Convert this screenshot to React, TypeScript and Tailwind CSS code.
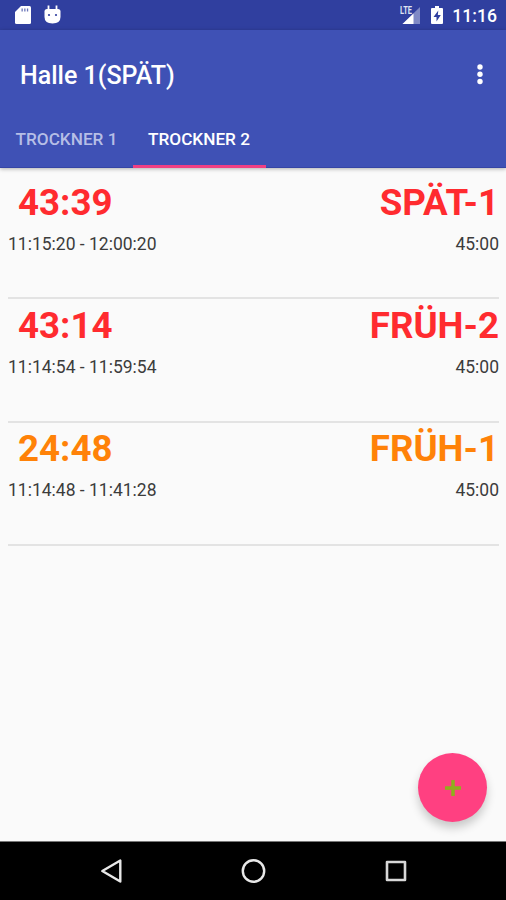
const timers = [
  { left: '43:39', name: 'SPÄT-1', range: '11:15:20 - 12:00:20', duration: '45:00', color: 'text-[#ff2b2f]' },
  { left: '43:14', name: 'FRÜH-2', range: '11:14:54 - 11:59:54', duration: '45:00', color: 'text-[#ff2b2f]' },
  { left: '24:48', name: 'FRÜH-1', range: '11:14:48 - 11:41:28', duration: '45:00', color: 'text-[#ff8208]' },
]

function StatusBar() {
  return (
    <div className="flex h-[30px] shrink-0 items-center bg-[#303f9f] pl-[15px] pr-[9px] text-white">
      <svg width="16" height="20" viewBox="0 0 16 20" fill="currentColor">
        <path d="M6 1h8.500q1.500 0 1.500 1.500v15q0 1.500-1.500 1.500h-13Q0 19 0 17.500V7z" />
        <path d="M6.500 3.500h1.300v3H6.500zM9.200 3.500h1.300v3H9.200zM11.900 3.500h1.300v3h-1.300z" fill="#6c77b9" />
      </svg>
      <svg className="ml-[13px]" width="17" height="20" viewBox="0 0 17 20">
        <path d="M4.500 .5v4M12.500 .5v4" stroke="currentColor" strokeWidth="1.800" />
        <path d="M.5 6.500Q.5 4 3 4h11q2.500 0 2.500 2.500V12q0 6.500-8 6.500t-8-6.500z" fill="currentColor" />
        <circle cx="5" cy="10" r="1.100" fill="#303f9f" />
        <circle cx="12" cy="10" r="1.100" fill="#303f9f" />
      </svg>
      <div className="ml-auto flex items-center">
        <svg width="22" height="20" viewBox="0 0 22 20">
          <path d="M22 2v17H4.500z" fill="#7f89c5" />
          <path d="M15.500 8.500V19H4.500z" fill="currentColor" />
          <text x="2" y="9" fontSize="10" fontWeight="700" textLength="12" lengthAdjust="spacingAndGlyphs" fill="#dfe2f2">LTE</text>
        </svg>
        <svg className="ml-[11px]" width="12" height="20" viewBox="0 0 12 20">
          <path d="M4 1h4v2h3q1 0 1 1v14q0 1-1 1H1q-1 0-1-1V4q0-1 1-1h3z" fill="currentColor" />
          <path d="M7.300 5.500 2.500 12h3v4.500L9.800 10H6.800z" fill="#303f9f" />
        </svg>
        <span className="ml-[9px] mt-[3px] text-[17.600px] font-medium leading-none">11:16</span>
      </div>
    </div>
  )
}

function TimerRow({ timer }: { timer: (typeof timers)[number] }) {
  return (
    <li className="h-[123.330px] border-b-2 border-[#e3e3e3] pt-[4.500px]">
      <div className={`flex justify-between pl-[10px] text-[36.700px] font-bold leading-[44px] ${timer.color}`}>
        <span>{timer.left}</span>
        <span>{timer.name}</span>
      </div>
      <div className="mt-[8px] flex justify-between text-[17.500px] leading-[22px] text-[#3c3c3c]">
        <span>{timer.range}</span>
        <span>{timer.duration}</span>
      </div>
    </li>
  )
}

export default function App() {
  return (
    <div className="flex h-[900px] w-[506px] flex-col overflow-hidden bg-[#fafafa] font-[Roboto,sans-serif]">
      <StatusBar />

      <header className="flex h-[138px] shrink-0 flex-col bg-[#3f51b5] text-white shadow-[inset_0_-1px_0_#3545a5,0_1px_4px_rgba(0,0,0,0.3)]">
        <div className="flex h-[80px] items-center justify-between pl-[20px] pr-[22px] pt-[10px]">
          <h1 className="pt-px text-[25px] font-medium">Halle 1(SPÄT)</h1>
          <svg width="8" height="22" viewBox="0 0 8 22" fill="currentColor">
            <circle cx="4" cy="3" r="2.700" />
            <circle cx="4" cy="10.300" r="2.700" />
            <circle cx="4" cy="17.500" r="2.700" />
          </svg>
        </div>
        <nav className="flex flex-1 text-[17.200px] font-medium">
          <button className="w-[133px] pt-[2px] text-[#b6bee6]">TROCKNER 1</button>
          <button className="w-[133px] border-b-[3px] border-[#f03f83] pr-px pt-[5px]">TROCKNER 2</button>
        </nav>
      </header>

      <main className="relative flex-1 pl-[8px] pr-[7px] pt-[8px]">
        <ul>
          {timers.map(timer => (
            <TimerRow key={timer.name} timer={timer} />
          ))}
        </ul>
        <button className="absolute bottom-[19px] right-[19px] flex h-[69px] w-[69px] items-center justify-center rounded-full bg-[#ff4081] shadow-[0_6px_10px_rgba(0,0,0,0.2)]">
          <svg width="18" height="18" viewBox="0 0 18 18" stroke="#8fb01c" strokeWidth="3.500">
            <path d="M9 1v16M1 9h16" />
          </svg>
        </button>
      </main>

      <nav className="flex h-[59px] shrink-0 items-center justify-between border-t border-[#777] bg-black pl-[100px] pr-[99px]">
        <svg width="22" height="26" viewBox="0 0 22 26" fill="none" stroke="#e8e8e8" strokeWidth="2.400" strokeLinejoin="round">
          <path d="M20.300 2.500v21L2.300 13z" />
        </svg>
        <svg width="26" height="26" viewBox="0 0 26 26" fill="none" stroke="#e8e8e8" strokeWidth="2.400">
          <circle cx="12.500" cy="13" r="10.700" />
        </svg>
        <svg width="22" height="22" viewBox="0 0 22 22" fill="none" stroke="#d8d8d8" strokeWidth="2.600" strokeLinejoin="round">
          <path d="M2 2h18v18H2z" />
        </svg>
      </nav>
    </div>
  )
}
